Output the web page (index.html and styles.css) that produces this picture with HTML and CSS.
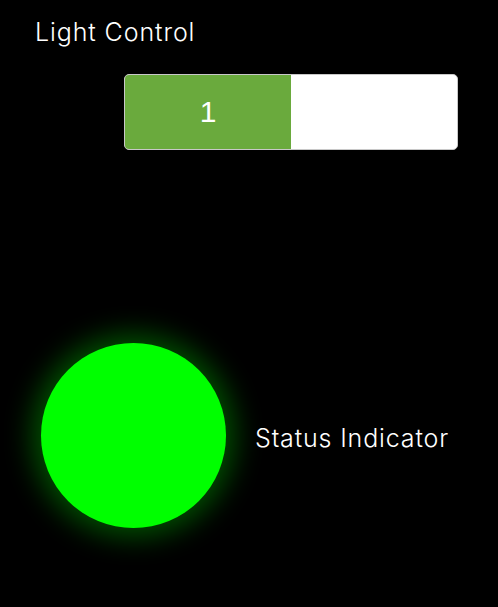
FILE: index.html
```html
<!DOCTYPE html>
<html>
<head>
<meta charset="utf-8">
<link rel="stylesheet" href="styles.css">
</head>
<body>
<div class="panel">
  <div class="title">Light Control</div>
  <div class="slider-row">
    <div class="slider">
      <div class="fill" style="width:50%"><span class="value">1</span></div>
    </div>
  </div>
  <div class="status-row">
    <div class="lamp"></div>
    <div class="status-label">Status Indicator</div>
  </div>
</div>
</body>
</html>
```
FILE: styles.css
```css
html, body {
  margin: 0;
  padding: 0;
  background: #000;
}
body {
  width: 498px;
  height: 607px;
  overflow: hidden;
  font-family: Inter, "Open Sans", sans-serif;
  font-weight: 300;
  color: #fff;
}
.panel {
  display: flex;
  flex-direction: column;
}
.title {
  font-size: 25px;
  line-height: 30px;
  padding: 17px 0 0 35px;
  height: 57px;
  box-sizing: border-box;
  letter-spacing: 0.9px;
}
.slider-row {
  padding: 17px 0 0 124px;
}
.slider {
  width: 334px;
  height: 76px;
  box-sizing: border-box;
  border: 1px solid #c8c8c8;
  border-radius: 5px;
  background: #fff;
  overflow: hidden;
  display: flex;
}
.fill {
  background: #6aaa3d;
  display: flex;
  align-items: center;
  justify-content: center;
}
.value {
  font-family: "Liberation Sans", Arial, sans-serif;
  font-weight: 400;
  font-size: 30px;
  color: #fff;
}
.status-row {
  display: flex;
  align-items: center;
  padding: 193px 0 0 41px;
}
.lamp {
  width: 185px;
  height: 185px;
  border-radius: 50%;
  background: #00ff00;
  box-shadow: 0 0 28px 9px rgba(0, 160, 0, 0.5);
  flex: none;
}
.status-label {
  margin-left: 29px;
  font-size: 25px;
  line-height: 30px;
  margin-top: 4px;
  letter-spacing: 0.85px;
}
```
